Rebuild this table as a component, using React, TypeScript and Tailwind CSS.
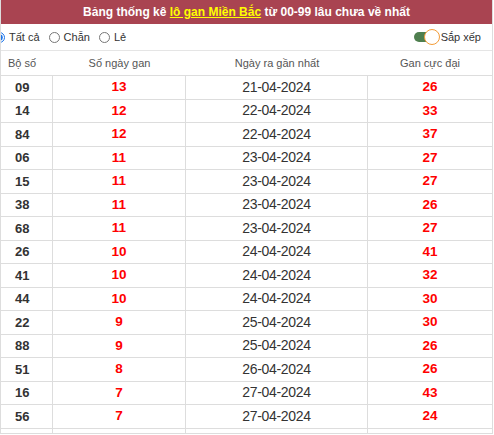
import { useState } from "react";

interface Row {
  so: string;
  gan: number;
  ngay: string;
  max: number;
}

const rows: Row[] = [
  { so: "09", gan: 13, ngay: "21-04-2024", max: 26 },
  { so: "14", gan: 12, ngay: "22-04-2024", max: 33 },
  { so: "84", gan: 12, ngay: "22-04-2024", max: 37 },
  { so: "06", gan: 11, ngay: "23-04-2024", max: 27 },
  { so: "15", gan: 11, ngay: "23-04-2024", max: 27 },
  { so: "38", gan: 11, ngay: "23-04-2024", max: 26 },
  { so: "68", gan: 11, ngay: "23-04-2024", max: 27 },
  { so: "26", gan: 10, ngay: "24-04-2024", max: 41 },
  { so: "41", gan: 10, ngay: "24-04-2024", max: 32 },
  { so: "44", gan: 10, ngay: "24-04-2024", max: 30 },
  { so: "22", gan: 9, ngay: "25-04-2024", max: 30 },
  { so: "88", gan: 9, ngay: "25-04-2024", max: 26 },
  { so: "51", gan: 8, ngay: "26-04-2024", max: 26 },
  { so: "16", gan: 7, ngay: "27-04-2024", max: 43 },
  { so: "56", gan: 7, ngay: "27-04-2024", max: 24 },
];

const cols = "grid grid-cols-[52px_133px_182px_1fr]";

export default function App() {
  const [filter, setFilter] = useState("all");

  return (
    <div className="w-[494px] h-[435px] overflow-hidden bg-white font-['Liberation_Sans',Arial,sans-serif] text-[#333]">
      <div className="w-[493px] h-[434px] border-x border-b border-[#ddd] overflow-hidden">
        {/* Title */}
        <div className="h-6 bg-[#a94451] flex items-center justify-center text-[12px] font-bold text-white">
          Bảng thống kê&nbsp;
          <a href="#" className="text-[#ffff00] underline">lô gan Miền Bắc</a>
          &nbsp;từ 00-99 lâu chưa về nhất
        </div>

        {/* Options */}
        <div className="h-[27px] flex items-center justify-between border-b border-[#e5e5e5] text-[11px]">
          <div className="flex items-center -ml-[10px]">
            {[
              { id: "all", label: "Tất cả" },
              { id: "even", label: "Chẵn" },
              { id: "odd", label: "Lẻ" },
            ].map((o) => (
              <label key={o.id} className="flex items-center mr-[6px] ml-[3px]">
                <input
                  type="radio"
                  name="filter"
                  checked={filter === o.id}
                  onChange={() => setFilter(o.id)}
                  className="w-[11px] h-[11px] m-0 mr-[4px] accent-[#1a73e8]"
                />
                {o.label}
              </label>
            ))}
          </div>
          <div className="flex items-center mr-[11px] text-[11px]">
            <span className="relative w-[26px] h-[16px] flex items-center">
              <span className="w-[22px] h-[10px] rounded-full bg-[#4f7f4f]" />
              <span className="absolute right-0 top-0 w-[16px] h-[16px] rounded-full bg-white border-[1.5px] border-[#f39c38]" />
            </span>
            <span className="ml-[1px]">Sắp xếp</span>
          </div>
        </div>

        {/* Header row */}
        <div className={`${cols} h-[25px] items-center border-b border-[#ddd] text-[11px] text-[#555]`}>
          <div className="pl-[7px]">Bộ số</div>
          <div className="text-center">Số ngày gan</div>
          <div className="text-center">Ngày ra gần nhất</div>
          <div className="text-center">Gan cực đại</div>
        </div>

        {rows.map((r) => (
          <div key={r.so} className={`${cols} h-[23.5px] items-center border-b border-[#ddd]`}>
            <div className="pl-[14px] h-full flex items-center border-r border-[#ddd] text-[13px] font-bold">
              {r.so}
            </div>
            <div className="h-full flex items-center justify-center border-r border-[#ddd] text-[13.5px] font-bold text-[#ff0000]">
              {r.gan}
            </div>
            <div className="h-full flex items-center justify-center border-r border-[#ddd] text-[14px] tracking-[-0.3px]">
              {r.ngay}
            </div>
            <div className="h-full flex items-center justify-center text-[13.5px] font-bold text-[#ff0000]">
              {r.max}
            </div>
          </div>
        ))}
        <div className={`${cols} h-[10px]`}>
          <div className="border-r border-[#ddd]" />
          <div className="border-r border-[#ddd]" />
          <div className="border-r border-[#ddd]" />
          <div />
        </div>
      </div>
    </div>
  );
}
